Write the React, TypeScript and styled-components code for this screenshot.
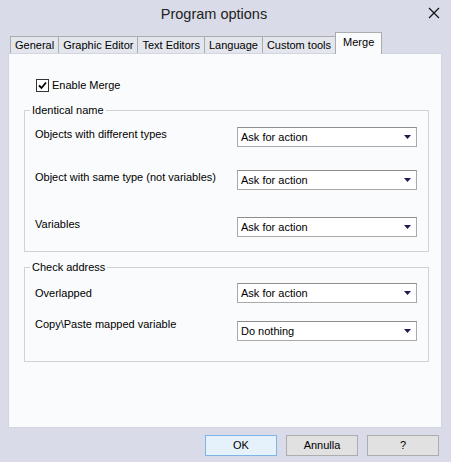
import React from "react";
import styled, { createGlobalStyle } from "styled-components";

const GlobalStyle = createGlobalStyle`
  html, body { margin: 0; padding: 0; }
  body {
    background: #d9dce8;
    font-family: "Liberation Sans", Arial, sans-serif;
    font-size: 11px;
    color: #000;
  }
`;

const Window = styled.div`
  width: 451px;
  height: 462px;
  display: flex;
  flex-direction: column;
  background: #d9dce8;
  overflow: hidden;
`;

const TitleBar = styled.div`
  height: 32px;
  display: flex;
  align-items: flex-start;
`;

const Title = styled.div`
  flex: 1;
  text-align: center;
  font-size: 14.5px;
  line-height: 28px;
  color: #222;
`;

const CloseBox = styled.div`
  width: 12px;
  height: 12px;
  margin: 7px 11px 0 0;
  display: flex;
`;

const TabStrip = styled.div`
  height: 21px;
  display: flex;
  align-items: flex-end;
  padding-left: 10px;
`;

const Tab = styled.div<{ $active?: boolean }>`
  box-sizing: border-box;
  height: ${(p) => (p.$active ? "22px" : "17px")};
  line-height: ${(p) => (p.$active ? "18px" : "16px")};
  padding: ${(p) => (p.$active ? "0 7px" : "0 4px")};
  border: 1px solid #acacac;
  border-bottom: none;
  margin-right: -1px;
  margin-bottom: ${(p) => (p.$active ? "-1px" : "0")};
  background: ${(p) => (p.$active ? "#fafbfc" : "#e4e6ee")};
  position: relative;
  z-index: ${(p) => (p.$active ? 1 : 0)};
  white-space: nowrap;
`;

const Panel = styled.div`
  box-sizing: border-box;
  height: 375px;
  margin: 0 9px 0 8px;
  background: #fafbfc;
  border: 1px solid #d3d6e0;
  padding: 25px 12px 0 15px;
  display: flex;
  flex-direction: column;
`;

const CheckRow = styled.label`
  display: flex;
  align-items: center;
  gap: 3px;
  height: 13px;
  margin-left: 12px;
  line-height: 13px;
`;

const CheckBox = styled.span`
  box-sizing: border-box;
  width: 13px;
  height: 13px;
  border: 1px solid #333;
  background: #fff;
  display: flex;
  align-items: center;
  justify-content: center;
`;

const Group = styled.fieldset<{ $mt: number; $pt: number; $pb: number }>`
  margin: ${(p) => p.$mt}px 0 0 0;
  padding: ${(p) => p.$pt}px 11px ${(p) => p.$pb}px 10px;
  border: 1px solid #d2d2d2;
  min-width: 0;
`;

const Legend = styled.legend`
  padding: 0 2px;
  margin-left: -5px;
  line-height: 14px;
  font-size: 11px;
`;

const Row = styled.div<{ $mt?: number }>`
  display: grid;
  grid-template-columns: 1fr 180px;
  align-items: start;
  margin-top: ${(p) => p.$mt ?? 0}px;
`;

const RowLabel = styled.div<{ $shift?: number }>`
  line-height: 14px;
  margin-top: ${(p) => p.$shift ?? 0}px;
`;

const Combo = styled.div`
  box-sizing: border-box;
  height: 20px;
  background: #fff;
  border: 1px solid #a9a9a9;
  border-top-color: #8e8e8e;
  display: flex;
  align-items: center;
  justify-content: space-between;
  padding: 0 5px 0 3px;
`;

const Footer = styled.div`
  display: flex;
  justify-content: flex-end;
  gap: 9px;
  padding: 7px 12px 0 0;
`;

const Button = styled.div<{ $primary?: boolean }>`
  box-sizing: border-box;
  width: 72px;
  height: 21px;
  line-height: 19px;
  text-align: center;
  background: ${(p) => (p.$primary ? "#e5f1fb" : "#e1e1e1")};
  border: 1px solid ${(p) => (p.$primary ? "#7eb4ea" : "#adadad")};
`;

const Arrow = () => (
  <svg width="7" height="4" viewBox="0 0 7 4">
    <polygon points="0,0 7,0 3.5,4" fill="#1b1b4f" />
  </svg>
);

const Select = ({ value }: { value: string }) => (
  <Combo>
    <span>{value}</span>
    <Arrow />
  </Combo>
);

export default function App() {
  return (
    <>
      <GlobalStyle />
      <Window>
        <TitleBar>
          <Title>Program options</Title>
          <CloseBox>
            <svg width="12" height="12" viewBox="0 0 12 12">
              <path d="M1 1 L11 11 M11 1 L1 11" stroke="#111" strokeWidth="1.2" />
            </svg>
          </CloseBox>
        </TitleBar>
        <TabStrip>
          <Tab>General</Tab>
          <Tab>Graphic Editor</Tab>
          <Tab>Text Editors</Tab>
          <Tab>Language</Tab>
          <Tab>Custom tools</Tab>
          <Tab $active>Merge</Tab>
        </TabStrip>
        <Panel>
          <CheckRow>
            <CheckBox>
              <svg width="9" height="9" viewBox="0 0 9 9">
                <path d="M1 4.5 L3.5 7 L8 1.5" stroke="#000" strokeWidth="1.8" fill="none" />
              </svg>
            </CheckBox>
            Enable Merge
          </CheckRow>
          <Group $mt={11} $pt={10} $pb={14}>
            <Legend>Identical name</Legend>
            <Row>
              <RowLabel>Objects with different types</RowLabel>
              <Select value="Ask for action" />
            </Row>
            <Row $mt={23}>
              <RowLabel>Object with same type (not variables)</RowLabel>
              <Select value="Ask for action" />
            </Row>
            <Row $mt={27}>
              <RowLabel>Variables</RowLabel>
              <Select value="Ask for action" />
            </Row>
          </Group>
          <Group $mt={8} $pt={9} $pb={20}>
            <Legend>Check address</Legend>
            <Row>
              <RowLabel $shift={3}>Overlapped</RowLabel>
              <Select value="Ask for action" />
            </Row>
            <Row $mt={18}>
              <RowLabel $shift={-4}>Copy\Paste mapped variable</RowLabel>
              <Select value="Do nothing" />
            </Row>
          </Group>
        </Panel>
        <Footer>
          <Button $primary>OK</Button>
          <Button>Annulla</Button>
          <Button>?</Button>
        </Footer>
      </Window>
    </>
  );
}
